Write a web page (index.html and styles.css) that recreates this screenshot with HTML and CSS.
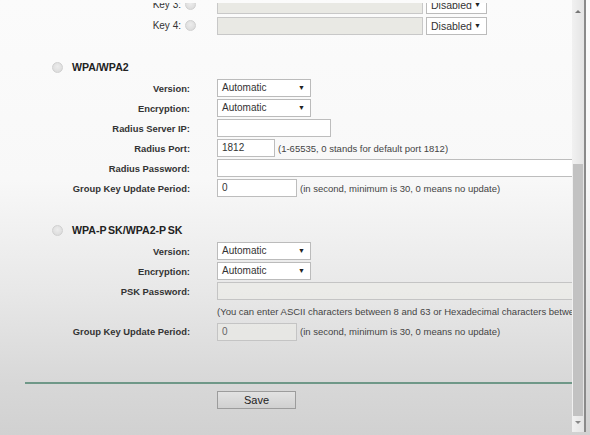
FILE: index.html
```html
<!DOCTYPE html>
<html>
<head>
<meta charset="utf-8">
<link rel="stylesheet" href="styles.css">
</head>
<body>
<div class="window">
  <div class="viewport">
    <div class="content">
      <div class="row key-row">
        <div class="label">Key 3:</div>
        <div class="radio-cell"><span class="radio"></span></div>
        <div class="field"><span class="input key-input disabled"></span><span class="select small-select">Disabled<span class="arrow">▼</span></span></div>
      </div>
      <div class="row key-row">
        <div class="label">Key 4:</div>
        <div class="radio-cell"><span class="radio"></span></div>
        <div class="field"><span class="input key-input disabled"></span><span class="select small-select">Disabled<span class="arrow">▼</span></span></div>
      </div>

      <div class="section-head first">
        <span class="radio"></span><span class="head-text">WPA/WPA2</span>
      </div>
      <div class="row">
        <div class="label">Version:</div>
        <div class="field"><span class="select">Automatic<span class="arrow">▼</span></span></div>
      </div>
      <div class="row">
        <div class="label">Encryption:</div>
        <div class="field"><span class="select">Automatic<span class="arrow">▼</span></span></div>
      </div>
      <div class="row">
        <div class="label">Radius Server IP:</div>
        <div class="field"><span class="input ip-input"></span></div>
      </div>
      <div class="row">
        <div class="label">Radius Port:</div>
        <div class="field"><span class="input port-input">1812</span><span class="hint">(1-65535, 0 stands for default port 1812)</span></div>
      </div>
      <div class="row">
        <div class="label">Radius Password:</div>
        <div class="field"><span class="input wide-input"></span></div>
      </div>
      <div class="row">
        <div class="label">Group Key Update Period:</div>
        <div class="field"><span class="input period-input">0</span><span class="hint">(in second, minimum is 30, 0 means no update)</span></div>
      </div>

      <div class="section-head second">
        <span class="radio"></span><span class="head-text">WPA-P<span class="gap">S</span><span class="cursor">K</span>/WPA2-P<span class="gap">S</span>K</span>
      </div>
      <div class="row">
        <div class="label">Version:</div>
        <div class="field"><span class="select">Automatic<span class="arrow">▼</span></span></div>
      </div>
      <div class="row">
        <div class="label">Encryption:</div>
        <div class="field"><span class="select">Automatic<span class="arrow">▼</span></span></div>
      </div>
      <div class="row">
        <div class="label">PSK Password:</div>
        <div class="field"><span class="input wide-input disabled-dim"></span></div>
      </div>
      <div class="row">
        <div class="label"></div>
        <div class="field"><span class="note">(You can enter ASCII characters between 8 and 63 or Hexadecimal characters between 8 and 64.)</span></div>
      </div>
      <div class="row tall">
        <div class="label">Group Key Update Period:</div>
        <div class="field"><span class="input period-input disabled-dim">0</span><span class="hint">(in second, minimum is 30, 0 means no update)</span></div>
      </div>

      <div class="rule"></div>
      <div class="row save-row">
        <div class="label"></div>
        <div class="field"><span class="button">Save</span></div>
      </div>
    </div>
  </div>
  <div class="scrollbar">
    <div class="track">
      <span class="sb-arrow up"></span>
      <div class="thumb"></div>
      <span class="sb-arrow down"></span>
    </div>
    <div class="sb-edge"></div>
  </div>
</div>
</body>
</html>
```
FILE: styles.css
```css
html, body {
  margin: 0;
  padding: 0;
}
body {
  width: 590px;
  height: 435px;
  overflow: hidden;
  font-family: "Liberation Sans", Arial, sans-serif;
  background: #ffffff;
}
.window {
  display: flex;
  width: 590px;
  height: 435px;
  padding-top: 3px;
  box-sizing: border-box;
  background: linear-gradient(to bottom, #fbfbfb 0px, #f8f8f8 180px, #e8e8e8 290px, #d8d8d8 380px, #d1d1d1 435px);
}
.viewport {
  width: 572px;
  height: 429px;
  overflow: hidden;
  flex: none;
}
.content {
  margin-top: -9px;
  width: 620px;
}
.row {
  display: grid;
  grid-template-columns: 190px 27px 1fr;
  height: 20px;
  align-items: center;
}
.row .field {
  grid-column: 3;
  display: flex;
  align-items: center;
  white-space: nowrap;
}
.key-row {
  grid-template-columns: 181px 36px 1fr;
  height: 21px;
}
.key-row .label {
  font-weight: normal;
  font-size: 10px;
  color: #333;
}
.radio-cell {
  display: flex;
  align-items: center;
  padding-left: 4px;
}
.label {
  text-align: right;
  font-size: 9.4px;
  font-weight: bold;
  color: #333;
  white-space: nowrap;
}
.radio {
  display: inline-block;
  width: 9px;
  height: 9px;
  border-radius: 50%;
  background: radial-gradient(circle at 50% 40%, #ececec, #d8d8d8);
  border: 1px solid #d0d0d0;
}
.input {
  display: inline-block;
  box-sizing: border-box;
  height: 18px;
  border: 1px solid #bdbdbd;
  background: #ffffff;
  font-size: 10px;
  color: #333;
  line-height: 16px;
  padding-left: 4px;
}
.disabled {
  background: #e9e9e4;
  border-color: #c8c8c8;
}
.disabled-dim {
  background: rgba(236, 236, 232, 0.55);
  border-color: #c4c4c4;
  color: #666;
}
.key-input {
  width: 206px;
}
.ip-input {
  width: 114px;
}
.port-input {
  width: 58px;
}
.period-input {
  width: 80px;
}
.wide-input {
  width: 400px;
}
.select {
  position: relative;
  display: inline-block;
  box-sizing: border-box;
  width: 94px;
  height: 18px;
  border: 1px solid #bbbbbb;
  background: #ffffff;
  font-size: 10px;
  color: #333;
  line-height: 16px;
  padding-left: 4px;
}
.small-select {
  width: 61px;
  margin-left: 3px;
  font-size: 10.5px;
}
.arrow {
  position: absolute;
  right: 5px;
  top: 0;
  font-size: 7px;
  color: #222;
}
.hint {
  font-size: 9.5px;
  color: #444;
  margin-left: 3px;
}
.note {
  font-size: 9.5px;
  color: #444;
}
.section-head {
  display: flex;
  align-items: center;
  height: 20px;
  padding-left: 52px;
}
.section-head.first {
  margin-top: 21px;
  margin-bottom: 1px;
}
.section-head.second {
  margin-top: 22px;
  margin-bottom: 1px;
}
.section-head .radio {
  margin-right: 9px;
}
.head-text {
  font-size: 10.6px;
  font-weight: bold;
  color: #222;
}
.gap {
  margin-left: 1.5px;
}
.row.tall {
  height: 21px;
}
.rule {
  margin-top: 40px;
  margin-left: 25px;
  width: 560px;
  height: 2px;
  background: #6f9888;
}
.save-row {
  margin-top: 6px;
}
.button {
  display: inline-block;
  box-sizing: border-box;
  width: 79px;
  height: 18px;
  border: 1px solid #9c9c9c;
  background: linear-gradient(to bottom, #e2e2e2, #d0d0d0);
  text-align: center;
  font-size: 11px;
  line-height: 16px;
  color: #222;
}
.scrollbar {
  display: flex;
  flex: none;
  width: 18px;
  height: 432px;
  margin-top: -3px;
}
.track {
  width: 12px;
  height: 100%;
  background: linear-gradient(to right, #f1f1f1, #e4e4e4);
  display: flex;
  flex-direction: column;
  align-items: center;
}
.sb-edge {
  width: 2px;
  height: 100%;
  background: #8a8a8a;
}
.thumb {
  width: 10px;
  margin-top: 151px;
  height: 252px;
  background: #c2c2c2;
}
.sb-arrow {
  width: 0;
  height: 0;
  border-left: 3px solid transparent;
  border-right: 3px solid transparent;
}
.sb-arrow.up {
  margin-top: 10px;
  border-bottom: 3px solid #777;
}
.sb-arrow.down {
  margin-top: 5px;
  border-top: 3px solid #888;
}
```
